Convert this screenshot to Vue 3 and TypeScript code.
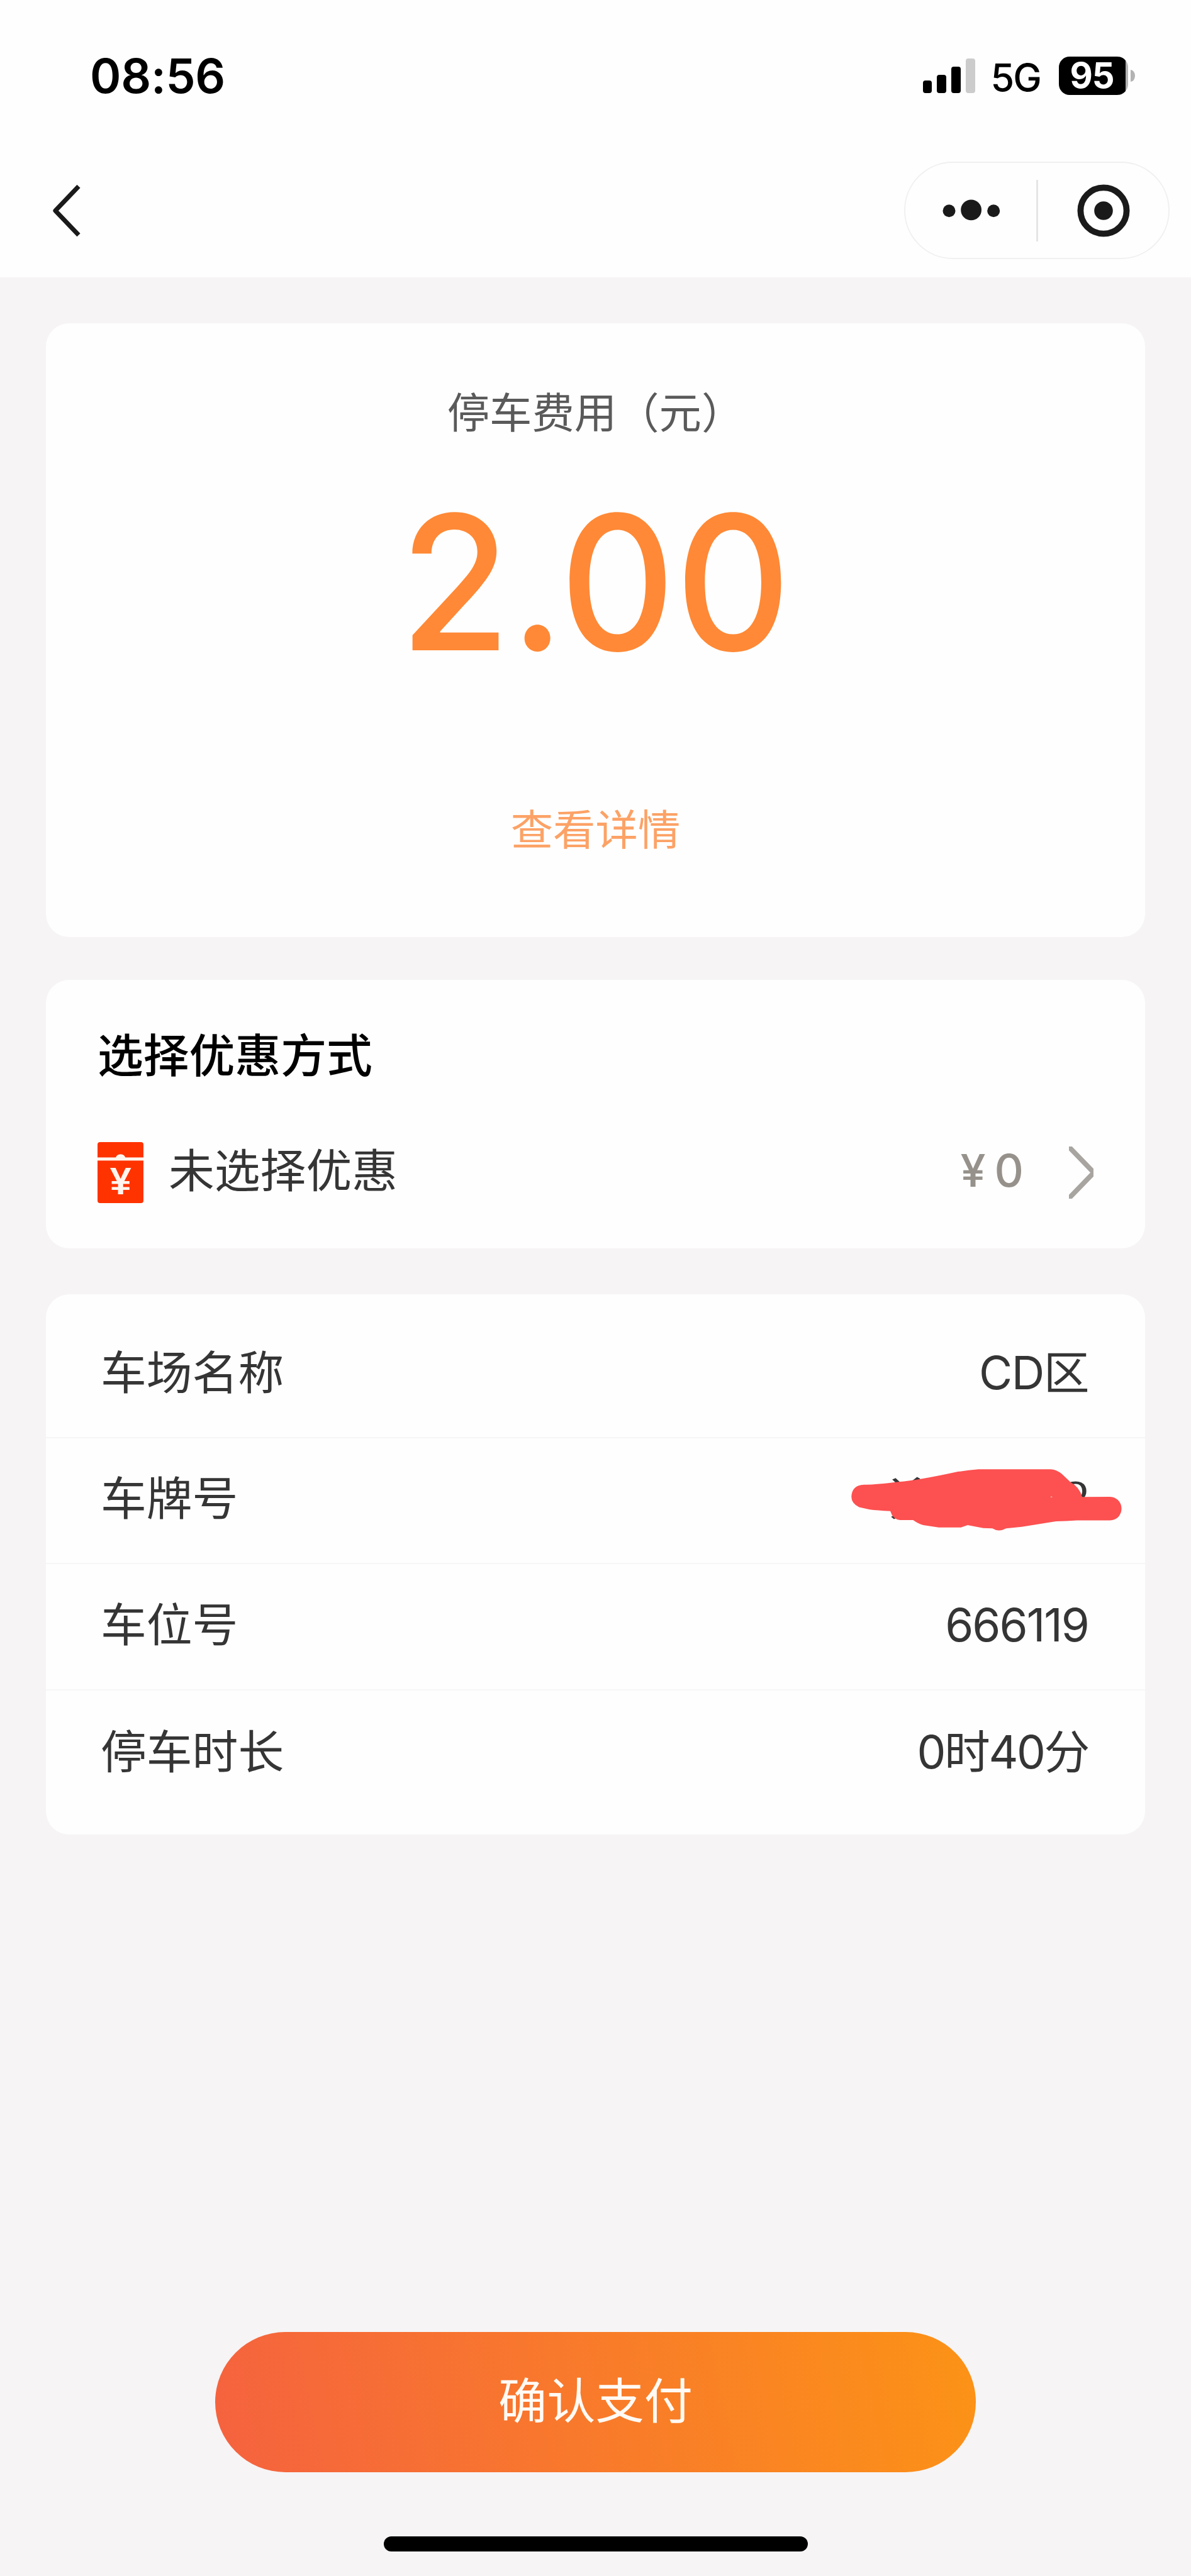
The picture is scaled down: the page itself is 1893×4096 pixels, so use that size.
<script setup lang="ts">
interface InfoRow {
  label: string
  value: string
  spacing: string
  masked?: boolean
}

const rows: InfoRow[] = [
  { label: '车场名称', value: 'CD区', spacing: '-1.5px' },
  { label: '车牌号', value: '', spacing: '0px', masked: true },
  { label: '车位号', value: '666119', spacing: '-2px' },
  { label: '停车时长', value: '0时40分', spacing: '-2.4px' },
]

const bars = [
  { height: 20, color: '#000' },
  { height: 29, color: '#000' },
  { height: 42, color: '#000' },
  { height: 55, color: '#ccc' },
]
</script>

<template>
  <div class="page">
    <header class="header">
      <div class="status">
        <span class="time">08:56</span>
        <div class="indicators">
          <div class="signal">
            <i v-for="(bar, i) in bars" :key="i" :style="{ height: bar.height + 'px', background: bar.color }"></i>
          </div>
          <span class="network">5G</span>
          <div class="battery"><span>95</span></div>
          <i class="battery-tip"></i>
        </div>
      </div>
      <div class="nav">
        <svg class="back" width="46" height="84" viewBox="0 0 46 84">
          <path d="M42 3.2 L5 42 L42 80.8" fill="none" stroke="#1a1a1a" stroke-width="7.2" stroke-linejoin="round" />
        </svg>
        <div class="capsule">
          <svg class="dots" width="92" height="34" viewBox="0 0 92 34">
            <circle cx="10.5" cy="17.3" r="10" />
            <circle cx="45.6" cy="15.9" r="16.4" />
            <circle cx="81.2" cy="17.3" r="10" />
          </svg>
          <i class="split"></i>
          <svg class="ring" width="84" height="84" viewBox="0 0 84 84">
            <circle cx="42" cy="42" r="36.6" fill="none" stroke="#1a1a1a" stroke-width="9.8" />
            <circle cx="42" cy="42" r="14.8" fill="#1a1a1a" />
          </svg>
        </div>
      </div>
    </header>

    <main class="content">
      <section class="card fee">
        <div class="fee-title">停车费用（元）</div>
        <div class="amount">2.00</div>
        <div class="detail">查看详情</div>
      </section>

      <section class="card discount">
        <h2>选择优惠方式</h2>
        <div class="discount-row">
          <svg class="coupon" width="73" height="97" viewBox="0 0 73 97">
            <rect width="73" height="97" rx="4" fill="#ff3300" />
            <rect y="24.4" width="73" height="5" fill="#fff5ee" />
            <path d="M28.6 25.5 A8.4 9 0 0 1 44.6 25.5 Z" fill="#fff5ee" />
            <text x="36.8" y="83" text-anchor="middle" fill="#fff5ee">¥</text>
          </svg>
          <span class="discount-name">未选择优惠</span>
          <span class="discount-value"><span class="yen">¥</span>0</span>
          <svg class="arrow" width="39" height="83" viewBox="0 0 39 83">
            <path d="M-2 -1.5 L39.5 41.5 L-2 84.5" fill="none" stroke="#a8a5a1" stroke-width="7.8" />
          </svg>
        </div>
      </section>

      <section class="card info">
        <div v-for="row in rows" :key="row.label" class="info-row">
          <span>{{ row.label }}</span>
          <svg v-if="row.masked" class="mask" viewBox="150 960 1140 420" preserveAspectRatio="none">
            <path d="M333 1032 L352 1060 M436 1026 L415 1052 M328 1278 L340 1294" fill="none" stroke="#353535" stroke-width="17" />
            <path d="M1062 1066 C1100 1045 1126 1065 1126 1115 C1126 1135 1121 1150 1112 1165" fill="none" stroke="#353535" stroke-width="17" />
            <path
              d="M208 1071 Q245 1074 352 1053 Q440 1040 590 988 Q640 975 685 969 L985 969 Q1010 970 1032 1000 L1070 1057 Q1105 1085 1117 1152 L1232 1151 C1262 1151 1281 1190 1281 1229 C1281 1270 1262 1307 1232 1307 L1095 1307 Q1050 1313 1008 1313 L865 1350 L800 1360 Q785 1373 771 1374 Q757 1373 743 1360 L705 1358 L640 1338 L612 1354 L520 1354 L455 1338 Q435 1330 413 1305 L358 1305 Q328 1300 318 1246 Q260 1242 232 1236 L188 1220 Q155 1195 156 1150 Q158 1075 208 1071Z"
              fill="#fd5050"
            />
            <ellipse cx="989" cy="1152" rx="3.5" ry="5" fill="#fd9a98" />
          </svg>
          <span v-else class="value" :style="{ letterSpacing: row.spacing }">{{ row.value }}</span>
        </div>
      </section>
    </main>

    <footer class="footer">
      <button class="pay" type="button">确认支付</button>
      <div class="home"></div>
    </footer>
  </div>
</template>

<style>
body {
  margin: 0;
  background: #f6f4f5;
}
</style>

<style scoped>
.page {
  width: 1893px;
  height: 4096px;
  display: flex;
  flex-direction: column;
  background: #f6f4f5;
  color: #353535;
  font-family: Inter, 'Noto Sans CJK SC', sans-serif;
  overflow: hidden;
}
.header {
  height: 441px;
  flex: none;
  background: #fefefe;
}
.status {
  height: 240px;
  box-sizing: border-box;
  padding: 0 89px 0 143px;
  display: flex;
  align-items: center;
  justify-content: space-between;
  color: #000;
}
.time {
  font-size: 75px;
  font-weight: 600;
  line-height: 90px;
  margin-top: 1px;
  letter-spacing: -0.3px;
}
.indicators {
  display: flex;
  align-items: center;
}
.signal {
  display: flex;
  align-items: flex-end;
  gap: 8px;
  margin-right: 25px;
}
.signal i {
  width: 14.7px;
  border-radius: 4px;
}
.network {
  font-size: 61px;
  font-weight: 500;
  line-height: 62px;
  width: 108px;
  margin-top: 5px;
  letter-spacing: -2px;
}
.battery {
  width: 110px;
  height: 61px;
  border-radius: 17px;
  background: linear-gradient(to right, #000 105.5px, #b3b3b3 105.5px);
  display: flex;
  align-items: center;
}
.battery span {
  width: 106px;
  text-align: center;
  color: #fff;
  font-size: 56px;
  font-weight: 700;
  line-height: 61px;
  letter-spacing: -1px;
}
.battery-tip {
  width: 7px;
  height: 19px;
  margin-left: 4.5px;
  border-radius: 0 7px 7px 0 / 0 9.5px 9.5px 0;
  background: #b3b3b3;
}
.nav {
  display: flex;
  align-items: center;
  justify-content: space-between;
  padding: 17px 34px 0 83px;
}
.capsule {
  width: 422px;
  height: 155px;
  box-sizing: border-box;
  border: 2px solid #f0f0f0;
  border-radius: 78px;
  display: flex;
  align-items: center;
}
.dots {
  margin-left: 59px;
  fill: #1a1a1a;
  overflow: visible;
}
.split {
  width: 3px;
  height: 98px;
  margin-left: 57px;
  background: #e5e5e5;
}
.ring {
  margin-left: 62px;
}
.content {
  flex: 1;
  padding: 73px 73px 0;
  display: flex;
  flex-direction: column;
}
.card {
  background: #fefefe;
  border-radius: 37px;
}
.fee {
  height: 976px;
  display: flex;
  flex-direction: column;
  align-items: center;
}
.fee-title {
  margin-top: 93px;
  font-size: 67.4px;
  line-height: 100px;
  color: #5a5a5a;
}
.amount {
  margin-top: 69px;
  height: 300px;
  font-size: 298px;
  line-height: 300px;
  font-weight: 500;
  color: #ff8936;
  transform: scaleX(0.955);
}
.detail {
  margin-top: 194px;
  font-size: 67.4px;
  line-height: 100px;
  color: #fca266;
}
.discount {
  height: 427px;
  margin-top: 68px;
  box-sizing: border-box;
  padding: 71px 82px 0 82px;
}
.discount h2 {
  margin: 0;
  font-size: 72.8px;
  line-height: 100px;
  font-weight: 500;
  color: #000;
}
.discount-row {
  margin-top: 85px;
  height: 100px;
  display: flex;
  align-items: center;
}
.coupon text {
  font: 700 61px 'Liberation Sans', sans-serif;
}
.discount-name {
  margin-left: 40px;
  padding-bottom: 5px;
  font-size: 72.8px;
  line-height: 100px;
}
.discount-value {
  margin-left: auto;
  padding-bottom: 7px;
  font-size: 72px;
  font-weight: 500;
  line-height: 100px;
  color: #96928b;
}
.yen {
  margin-right: 14px;
}
.arrow {
  margin-left: 72px;
  overflow: hidden;
}
.info {
  margin-top: 73px;
  height: 859px;
  box-sizing: border-box;
  padding: 28px 0;
}
.info-row {
  height: 200.6px;
  box-sizing: border-box;
  padding: 0 90px 5px 87px;
  display: flex;
  align-items: center;
  justify-content: space-between;
  font-size: 72.8px;
  line-height: 100px;
  border-bottom: 2px solid #f6f6f6;
}
.info-row:last-child {
  border-bottom: none;
}
.mask {
  width: 435px;
  height: 101px;
  margin: 3px -56px 0 0;
}
.footer {
  flex: none;
  height: 388px;
  display: flex;
  flex-direction: column;
  align-items: center;
}
.pay {
  width: 1209px;
  height: 223px;
  border: 0;
  padding: 0 0 4px;
  border-radius: 112px;
  background: linear-gradient(78deg, #f5623f, #fc9316);
  color: #fffaf4;
  font: 400 77.2px/100px Inter, 'Noto Sans CJK SC', sans-serif;
}
.home {
  width: 674px;
  height: 24px;
  margin-top: 102px;
  border-radius: 12px;
  background: #000;
}
</style>
